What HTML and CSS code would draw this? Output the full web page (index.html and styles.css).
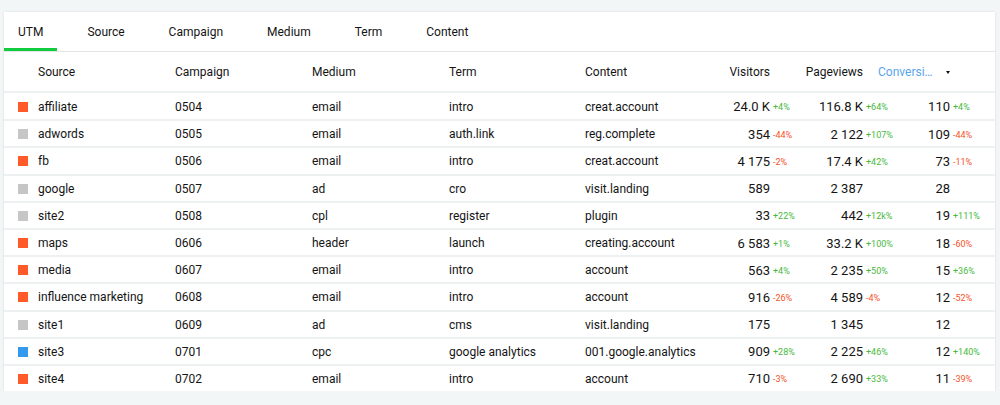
FILE: index.html
```html
<!DOCTYPE html>
<html>
<head>
<meta charset="utf-8">
<link rel="stylesheet" href="styles.css">
</head>
<body>
<div class="card">
  <div class="tabs">
    <div class="tab active">UTM</div>
    <div class="tab">Source</div>
    <div class="tab">Campaign</div>
    <div class="tab">Medium</div>
    <div class="tab">Term</div>
    <div class="tab">Content</div>
  </div>
  <div class="row head">
    <div class="c-src">Source</div>
    <div>Campaign</div>
    <div>Medium</div>
    <div>Term</div>
    <div>Content</div>
    <div class="num">Visitors</div>
    <div></div>
    <div class="num">Pageviews</div>
    <div class="conv-head"><span class="conv-label" title="Conversions">Conversi…</span><span class="caret"></span></div>
  </div>

  <div class="row"><div class="c-src"><i class="sq orange"></i>affiliate</div><div>0504</div><div>email</div><div>intro</div><div>creat.account</div>
    <div class="num">24.0 K</div><div class="d up">+4%</div><div class="num">116.8 K</div><div class="d up">+64%</div><div class="num">110</div><div class="d up">+4%</div></div>
  <div class="row"><div class="c-src"><i class="sq gray"></i>adwords</div><div>0505</div><div>email</div><div>auth.link</div><div>reg.complete</div>
    <div class="num">354</div><div class="d down">-44%</div><div class="num">2 122</div><div class="d up">+107%</div><div class="num">109</div><div class="d down">-44%</div></div>
  <div class="row"><div class="c-src"><i class="sq orange"></i>fb</div><div>0506</div><div>email</div><div>intro</div><div>creat.account</div>
    <div class="num">4 175</div><div class="d down">-2%</div><div class="num">17.4 K</div><div class="d up">+42%</div><div class="num">73</div><div class="d down">-11%</div></div>
  <div class="row"><div class="c-src"><i class="sq gray"></i>google</div><div>0507</div><div>ad</div><div>cro</div><div>visit.landing</div>
    <div class="num">589</div><div class="d"></div><div class="num">2 387</div><div class="d"></div><div class="num">28</div><div class="d"></div></div>
  <div class="row"><div class="c-src"><i class="sq gray"></i>site2</div><div>0508</div><div>cpl</div><div>register</div><div>plugin</div>
    <div class="num">33</div><div class="d up">+22%</div><div class="num">442</div><div class="d up">+12k%</div><div class="num">19</div><div class="d up">+111%</div></div>
  <div class="row"><div class="c-src"><i class="sq orange"></i>maps</div><div>0606</div><div>header</div><div>launch</div><div>creating.account</div>
    <div class="num">6 583</div><div class="d up">+1%</div><div class="num">33.2 K</div><div class="d up">+100%</div><div class="num">18</div><div class="d down">-60%</div></div>
  <div class="row"><div class="c-src"><i class="sq orange"></i>media</div><div>0607</div><div>email</div><div>intro</div><div>account</div>
    <div class="num">563</div><div class="d up">+4%</div><div class="num">2 235</div><div class="d up">+50%</div><div class="num">15</div><div class="d up">+36%</div></div>
  <div class="row"><div class="c-src"><i class="sq orange"></i>influence marketing</div><div>0608</div><div>email</div><div>intro</div><div>account</div>
    <div class="num">916</div><div class="d down">-26%</div><div class="num">4 589</div><div class="d down">-4%</div><div class="num">12</div><div class="d down">-52%</div></div>
  <div class="row"><div class="c-src"><i class="sq gray"></i>site1</div><div>0609</div><div>ad</div><div>cms</div><div>visit.landing</div>
    <div class="num">175</div><div class="d"></div><div class="num">1 345</div><div class="d"></div><div class="num">12</div><div class="d"></div></div>
  <div class="row"><div class="c-src"><i class="sq blue"></i>site3</div><div>0701</div><div>cpc</div><div>google analytics</div><div>001.google.analytics</div>
    <div class="num">909</div><div class="d up">+28%</div><div class="num">2 225</div><div class="d up">+46%</div><div class="num">12</div><div class="d up">+140%</div></div>
  <div class="row"><div class="c-src"><i class="sq orange"></i>site4</div><div>0702</div><div>email</div><div>intro</div><div>account</div>
    <div class="num">710</div><div class="d down">-3%</div><div class="num">2 690</div><div class="d up">+33%</div><div class="num">11</div><div class="d down">-39%</div></div>
</div>
</body>
</html>
```
FILE: styles.css
```css
html, body {
  margin: 0;
  padding: 0;
  background: #f3f6f7;
}
body {
  padding: 12px 5px 0 4px;
  font-family: Roboto, "Liberation Sans", sans-serif;
  font-size: 12px;
  color: #141414;
}
.card {
  background: #fff;
  box-shadow: 0 0 2px rgba(0,0,0,0.12);
}
.tabs {
  display: flex;
  gap: 16px;
  height: 39px;
  border-bottom: 1px solid #e2e5e7;
}
.tab {
  padding: 2px 14px 0;
  line-height: 37px;
  font-size: 12px;
  position: relative;
}
.tab.active::after {
  content: "";
  position: absolute;
  left: 0;
  right: 0;
  bottom: 0;
  height: 3px;
  background: #12cc3f;
}
.row {
  display: grid;
  grid-template-columns: 157px 137px 137px 136px 137px 48px 35px 58px 44px 43px 1fr;
  align-items: center;
  padding-left: 14px;
  padding-top: 1px;
  height: 24.2px;
  border-top: 2px solid #eef1f2;
}
.row.head {
  height: 38px;
  padding-top: 1px;
  border-top: none;
  border-bottom: 1px solid #eef1f2;
}
.row.head + .row {
  border-top: 1px solid #eef1f2;
  height: 25.2px;
}
.c-src {
  display: flex;
  align-items: center;
  padding-left: 20px;
}
.row:not(.head) .c-src {
  padding-left: 0;
}
.sq {
  width: 10px;
  height: 10px;
  margin-right: 10px;
  flex: none;
}
.orange { background: #ff5a2a; }
.gray { background: #c6c6c6; }
.blue { background: #3399ee; }
.num {
  text-align: right;
  font-size: 13px;
  white-space: nowrap;
}
.row.head .num { font-size: 12px; }
.d {
  font-size: 9px;
  padding-left: 3px;
  white-space: nowrap;
  padding-top: 1px;
}
.up { color: #48b83c; }
.down { color: #f4532a; }
.conv-head {
  grid-column: span 2;
  display: flex;
  align-items: center;
  padding-left: 15px;
}
.conv-label {
  color: #5aa5ee;
  width: 56px;
  white-space: nowrap;
}
.caret {
  margin-left: 12px;
  width: 0;
  height: 0;
  border-left: 2.5px solid transparent;
  border-right: 2.5px solid transparent;
  border-top: 3px solid #111;
}
```
